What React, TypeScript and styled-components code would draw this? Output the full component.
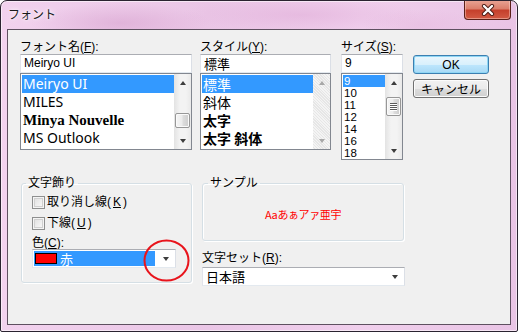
import React from 'react';
import styled, { createGlobalStyle } from 'styled-components';

const GlobalStyle = createGlobalStyle`
  html, body {
    margin: 0;
    padding: 0;
    background: #ffffff;
  }
  body {
    font-family: "Liberation Sans", "Noto Sans CJK JP", sans-serif;
    font-size: 12px;
    color: #000;
  }
  * {
    box-sizing: border-box;
  }
`;

const Window = styled.div`
  width: 518px;
  height: 332px;
  border: 1px solid #2a2330;
  border-radius: 7px 7px 2px 2px;
  background:
    radial-gradient(ellipse 90px 20px at 120px 22px, rgba(214, 160, 205, 0.55), transparent),
    radial-gradient(ellipse 120px 18px at 300px 14px, rgba(226, 176, 218, 0.6), transparent),
    radial-gradient(ellipse 60px 16px at 420px 24px, rgba(230, 186, 222, 0.5), transparent),
    linear-gradient(90deg, #f2d2ee 0%, #eac6e6 40%, #f0cfec 70%, #e9c4e5 100%);
  box-shadow: inset 0 0 0 1px rgba(255, 255, 255, 0.55);
  display: flex;
  flex-direction: column;
  overflow: hidden;
`;

const TitleBar = styled.div`
  height: 28px;
  display: flex;
  align-items: flex-start;
  padding-left: 7px;
`;

const Title = styled.div`
  margin-top: 6px;
  font-family: "Noto Sans CJK JP", sans-serif;
  font-size: 12px;
  line-height: 14px;
  color: #1a1a1a;
  text-shadow: 0 0 6px #fff, 0 0 3px #fff;
`;

const CloseButton = styled.div`
  margin-left: auto;
  margin-right: 6px;
  margin-top: -1px;
  width: 47px;
  height: 20px;
  border: 1px solid #5a2019;
  border-top: none;
  border-radius: 0 0 4px 4px;
  background: linear-gradient(#e9a596 0%, #dc7f6c 45%, #c5402c 55%, #d25a44 100%);
  box-shadow: inset 0 0 0 1px rgba(255, 220, 210, 0.45);
  display: flex;
  align-items: center;
  justify-content: center;
`;

const Client = styled.div`
  flex: 1;
  margin: 0 6px 6px;
  border: 1px solid #5e5060;
  background: #f0f0f0;
  padding: 10px 0 0 12px;
  display: flex;
  flex-direction: column;
`;

const TopRow = styled.div`
  display: flex;
  align-items: flex-start;
`;

const Column = styled.div<{ $w: number; $ml?: number }>`
  width: ${(p) => p.$w}px;
  margin-left: ${(p) => p.$ml ?? 0}px;
  display: flex;
  flex-direction: column;
`;

const Label = styled.div`
  height: 14px;
  font-size: 12px;
  line-height: 14px;
  white-space: nowrap;
`;

const TextBox = styled.div`
  height: 19px;
  border: 1px solid;
  border-color: #abadb3 #dbdfe6 #e3e9ef #e2e3ea;
  background: #fff;
  font-size: 12px;
  line-height: 17px;
  padding: 0 3px;
  white-space: nowrap;
`;

const ListBox = styled.div<{ $h: number }>`
  height: ${(p) => p.$h}px;
  border: 1px solid #828790;
  background: #fff;
  display: flex;
`;

const Items = styled.div`
  flex: 1;
  padding: 1px 0 0 1px;
  overflow: hidden;
`;

const Item = styled.div<{ $h: number; $size: number; $font?: string; $bold?: boolean; $sel?: boolean }>`
  height: ${(p) => p.$h}px;
  line-height: ${(p) => p.$h}px;
  font-size: ${(p) => p.$size}px;
  font-family: ${(p) => p.$font ?? '"Liberation Sans", "Noto Sans CJK JP", sans-serif'};
  font-weight: ${(p) => (p.$bold ? 700 : 400)};
  padding-left: 1px;
  white-space: nowrap;
  overflow: hidden;
  background: ${(p) => (p.$sel ? '#3399ff' : 'transparent')};
  color: ${(p) => (p.$sel ? '#fff' : '#000')};
`;

const ScrollBar = styled.div<{ $disabled?: boolean }>`
  width: 17px;
  display: flex;
  flex-direction: column;
  background: ${(p) =>
    p.$disabled
      ? 'repeating-linear-gradient(45deg, #f4f4f4 0 1px, #e6e6e6 1px 2px)'
      : 'linear-gradient(90deg, #e3e3e3 0%, #f3f3f3 35%, #f3f3f3 70%, #e9e9e9 100%)'};
`;

const ArrowCell = styled.div`
  height: 17px;
  display: flex;
  align-items: center;
  justify-content: center;
`;

const Tri = styled.div<{ $down?: boolean; $dim?: boolean; $w?: number }>`
  width: 0;
  height: 0;
  border-left: ${(p) => (p.$w ?? 7) / 2}px solid transparent;
  border-right: ${(p) => (p.$w ?? 7) / 2}px solid transparent;
  ${(p) =>
    p.$down
      ? `border-top: 4px solid ${p.$dim ? '#a8a8a8' : '#3d3d3d'};`
      : `border-bottom: 4px solid ${p.$dim ? '#a8a8a8' : '#3d3d3d'};`}
`;

const Track = styled.div`
  flex: 1;
  display: flex;
  flex-direction: column;
`;

const Thumb = styled.div<{ $h: number }>`
  height: ${(p) => p.$h}px;
  margin: 0 1px;
  border: 1px solid #979797;
  border-radius: 2px;
  background: linear-gradient(90deg, #f5f5f5 0%, #ececec 45%, #dcdcdc 55%, #cdcdcd 100%);
  box-shadow: inset 0 0 0 1px #fafafa;
  display: flex;
  flex-direction: column;
  align-items: center;
  justify-content: center;
  gap: 1px;
`;

const Grip = styled.div`
  width: 7px;
  height: 1px;
  background: #5a5a5a;
  box-shadow: 0 1px 0 #fff;
`;

const ButtonColumn = styled.div`
  width: 76px;
  margin-left: 10px;
  padding-top: 15px;
  display: flex;
  flex-direction: column;
  gap: 5px;
`;

const Button = styled.div<{ $default?: boolean }>`
  height: 19px;
  border: 1px solid ${(p) => (p.$default ? '#3c7fb1' : '#707070')};
  border-radius: 3px;
  background: ${(p) =>
    p.$default
      ? 'linear-gradient(#eaf6fd 0%, #d9f0fc 50%, #bee6fd 51%, #a7d9f5 100%)'
      : 'linear-gradient(#f2f2f2 0%, #ebebeb 50%, #dddddd 51%, #cfcfcf 100%)'};
  box-shadow: inset 0 0 0 1px ${(p) => (p.$default ? '#8fd6f4' : '#fcfcfc')};
  display: flex;
  align-items: center;
  justify-content: center;
  font-size: 12px;
  line-height: 14px;
`;

const BottomRow = styled.div`
  display: flex;
  align-items: flex-start;
  margin-top: 16px;
`;

const Group = styled.fieldset<{ $w: number; $h: number; $ml?: number }>`
  margin: 0 0 0 ${(p) => p.$ml ?? 0}px;
  padding: 0;
  width: ${(p) => p.$w}px;
  height: ${(p) => p.$h}px;
  border: 1px solid #d5dfe5;
  border-radius: 3px;
  box-shadow: 1px 1px 0 #fff, inset 1px 1px 0 #fff;
  min-inline-size: 0;
`;

const Legend = styled.legend<{ $ml: number }>`
  margin-left: ${(p) => p.$ml}px;
  padding: 0 2px;
  font-size: 12px;
  line-height: 14px;
`;

const GroupBody = styled.div`
  padding: 5px 0 0 10px;
  display: flex;
  flex-direction: column;
`;

const CheckRow = styled.label`
  height: 14px;
  display: flex;
  align-items: center;
  gap: 2px;
  margin-bottom: 7px;
  font-size: 12px;
  line-height: 14px;
`;

const CheckBox = styled.span`
  width: 13px;
  height: 13px;
  border: 1px solid #8e8f8f;
  background: linear-gradient(135deg, #dcdcdc 0%, #f0f0f0 60%, #fbfbfb 100%);
  box-shadow: inset 0 0 0 1px #f4f4f4, inset 0 0 0 2px #d0d0d0;
`;

const SmallLabel = styled.div`
  height: 12px;
  font-size: 12px;
  line-height: 12px;
  white-space: nowrap;
`;

const ComboWrap = styled.div`
  position: relative;
`;

const Combo = styled.div<{ $w: number }>`
  width: ${(p) => p.$w}px;
  height: 19px;
  border: 1px solid;
  border-color: #abadb3 #dbdfe6 #e3e9ef #e2e3ea;
  background: #fff;
  padding: 1px;
  display: flex;
  align-items: stretch;
`;

const ComboValue = styled.div<{ $sel?: boolean }>`
  width: ${(p) => (p.$sel ? '121px' : 'auto')};
  flex: ${(p) => (p.$sel ? '0 0 auto' : '1')};
  background: ${(p) => (p.$sel ? '#3399ff' : 'transparent')};
  color: ${(p) => (p.$sel ? '#fff' : '#000')};
  display: flex;
  align-items: center;
  padding-left: ${(p) => (p.$sel ? 1 : 2)}px;
  font-size: 13px;
  line-height: 15px;
  font-family: "Noto Sans CJK JP", sans-serif;
`;

const Swatch = styled.span<{ $color: string }>`
  width: 22px;
  height: 11px;
  border: 1px solid #000;
  background: ${(p) => p.$color};
  margin-right: 3px;
`;

const DropArrow = styled.div`
  width: 19px;
  display: flex;
  align-items: center;
  justify-content: center;
  padding-left: 2px;
`;

const Highlight = styled.svg`
  position: absolute;
  left: 111px;
  top: -10px;
  pointer-events: none;
`;

const SampleBody = styled.div`
  height: 49px;
  display: flex;
  align-items: center;
  justify-content: center;
  color: #ff0000;
  font-family: "Noto Sans CJK JP", sans-serif;
  font-size: 11px;
  line-height: 12px;
  letter-spacing: -0.4px;
  padding-bottom: 2px;
`;

const fontItems: { name: string; font?: string; size: number; bold?: boolean }[] = [
  { name: 'Meiryo UI', size: 14, font: '"Noto Sans", sans-serif' },
  { name: 'MILES', size: 14, font: '"Noto Sans", sans-serif' },
  { name: 'Minya Nouvelle', size: 15, font: '"Liberation Serif", serif', bold: true },
  { name: 'MS Outlook', size: 14, font: '"Noto Sans", sans-serif' },
];

const styleItems = [
  { name: '標準', bold: false },
  { name: '斜体', bold: false },
  { name: '太字', bold: true },
  { name: '太字 斜体', bold: true },
];

const sizes = ['9', '10', '11', '12', '14', '16', '18'];

const CJK = '"Noto Sans CJK JP", sans-serif';

function Scroll({ thumbTop, thumbH, grip, disabled }: { thumbTop?: number; thumbH?: number; grip?: boolean; disabled?: boolean }) {
  return (
    <ScrollBar $disabled={disabled}>
      <ArrowCell>
        <Tri $dim={disabled} />
      </ArrowCell>
      <Track>
        {thumbH ? (
          <Thumb $h={thumbH} style={{ marginTop: thumbTop }}>
            {grip && (
              <>
                <Grip />
                <Grip />
                <Grip />
                <Grip />
              </>
            )}
          </Thumb>
        ) : null}
      </Track>
      <ArrowCell>
        <Tri $down $dim={disabled} />
      </ArrowCell>
    </ScrollBar>
  );
}

export default function App() {
  return (
    <>
      <GlobalStyle />
      <Window>
        <TitleBar>
          <Title>フォント</Title>
          <CloseButton>
            <svg width="14" height="12" viewBox="0 0 14 12">
              <path d="M3 2 L11 10 M11 2 L3 10" stroke="#4a1a14" strokeWidth="4.2" strokeLinecap="round" />
              <path d="M3 2 L11 10 M11 2 L3 10" stroke="#ffffff" strokeWidth="2.4" strokeLinecap="round" />
            </svg>
          </CloseButton>
        </TitleBar>
        <Client>
          <TopRow>
            <Column $w={172}>
              <Label>
                フォント名(<u>F</u>):
              </Label>
              <TextBox>Meiryo UI</TextBox>
              <ListBox $h={77}>
                <Items>
                  {fontItems.map((f, i) => (
                    <Item key={f.name} $h={18} $size={f.size} $font={f.font} $bold={f.bold} $sel={i === 0}>
                      {f.name}
                    </Item>
                  ))}
                </Items>
                <Scroll thumbTop={22} thumbH={15} />
              </ListBox>
            </Column>
            <Column $w={131} $ml={8}>
              <Label>
                スタイル(<u>Y</u>):
              </Label>
              <TextBox style={{ fontFamily: CJK, fontSize: 13 }}>標準</TextBox>
              <ListBox $h={77}>
                <Items>
                  {styleItems.map((s, i) => (
                    <Item key={s.name} $h={18} $size={14} $font={CJK} $bold={s.bold} $sel={i === 0}>
                      {s.name}
                    </Item>
                  ))}
                </Items>
                <Scroll disabled />
              </ListBox>
            </Column>
            <Column $w={62} $ml={10}>
              <Label>
                サイズ(<u>S</u>):
              </Label>
              <TextBox>9</TextBox>
              <ListBox $h={87}>
                <Items>
                  {sizes.map((s, i) => (
                    <Item key={s} $h={12} $size={11.5} $sel={i === 0}>
                      {s}
                    </Item>
                  ))}
                </Items>
                <Scroll thumbTop={6} thumbH={19} grip />
              </ListBox>
            </Column>
            <ButtonColumn>
              <Button $default>OK</Button>
              <Button style={{ fontFamily: CJK }}>キャンセル</Button>
            </ButtonColumn>
          </TopRow>
          <BottomRow>
            <Group $w={171} $h={107} $ml={1}>
              <Legend $ml={4}>文字飾り</Legend>
              <GroupBody>
                <CheckRow>
                  <CheckBox />
                  取り消し線(<u>K</u>)
                </CheckRow>
                <CheckRow>
                  <CheckBox />
                  下線(<u>U</u>)
                </CheckRow>
                <SmallLabel>
                  色(<u>C</u>):
                </SmallLabel>
                <ComboWrap>
                  <Combo $w={144}>
                    <ComboValue $sel>
                      <Swatch $color="#ff0000" />赤
                    </ComboValue>
                    <DropArrow>
                      <Tri $down $w={7} />
                    </DropArrow>
                  </Combo>
                  <Highlight width="47" height="43" viewBox="0 0 47 43">
                    <ellipse cx="23.5" cy="21.5" rx="22" ry="20" fill="none" stroke="#e8141c" strokeWidth="2" />
                  </Highlight>
                </ComboWrap>
              </GroupBody>
            </Group>
            <Column $w={203} $ml={10}>
              <Group $w={202} $h={65}>
                <Legend $ml={5}>サンプル</Legend>
                <SampleBody>Aaあぁアァ亜宇</SampleBody>
              </Group>
              <Label style={{ marginTop: 10 }}>
                文字セット(<u>R</u>):
              </Label>
              <div style={{ marginTop: 2 }}>
                <Combo $w={203}>
                  <ComboValue>日本語</ComboValue>
                  <DropArrow>
                    <Tri $down $w={7} />
                  </DropArrow>
                </Combo>
              </div>
            </Column>
          </BottomRow>
        </Client>
      </Window>
    </>
  );
}
